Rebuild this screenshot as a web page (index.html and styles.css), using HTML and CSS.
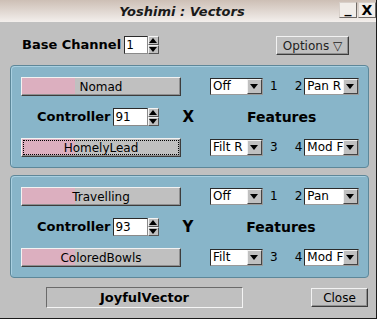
FILE: index.html
```
<!DOCTYPE html>
<html lang="en">
<head>
    <meta charset="UTF-8">
    <title>Yoshimi : Vectors</title>
    <link rel="stylesheet" href="styles.css">
</head>
<body>
    <div class="window">
        <div class="titlebar">
            <span class="title">Yoshimi : Vectors</span>
            <div class="wbtns">
                <span class="wbtn min">_</span>
                <span class="wbtn">X</span>
            </div>
        </div>

        <div class="toprow">
            <span class="lbl">Base Channel</span>
            <div class="spin">
                <span class="field base">1</span>
                <span class="arrows"><i class="up"></i><i class="down"></i></span>
            </div>
            <button class="btn options">Options &#9661;</button>
        </div>

        <div class="panel">
            <div class="row">
                <button class="btn inst"><span class="fill"></span><span class="txt">Nomad</span></button>
                <div class="choice c1"><span>Off</span><i></i></div>
                <span class="num n1">1</span>
                <span class="num n2">2</span>
                <div class="choice"><span>Pan R</span><i></i></div>
            </div>
            <div class="row mid">
                <span class="lbl ctl">Controller</span>
                <div class="spin">
                    <span class="field ctlval">91</span>
                    <span class="arrows"><i class="up"></i><i class="down"></i></span>
                </div>
                <span class="axis">X</span>
                <span class="feat">Features</span>
            </div>
            <div class="row">
                <button class="btn inst focus"><span class="fill"></span><span class="txt">HomelyLead</span></button>
                <div class="choice c1"><span>Filt R</span><i></i></div>
                <span class="num n1">3</span>
                <span class="num n2">4</span>
                <div class="choice"><span>Mod F</span><i></i></div>
            </div>
        </div>

        <div class="panel">
            <div class="row">
                <button class="btn inst"><span class="fill"></span><span class="txt">Travelling</span></button>
                <div class="choice c1"><span>Off</span><i></i></div>
                <span class="num n1">1</span>
                <span class="num n2">2</span>
                <div class="choice"><span>Pan</span><i></i></div>
            </div>
            <div class="row mid">
                <span class="lbl ctl">Controller</span>
                <div class="spin">
                    <span class="field ctlval">93</span>
                    <span class="arrows"><i class="up"></i><i class="down"></i></span>
                </div>
                <span class="axis">Y</span>
                <span class="feat">Features</span>
            </div>
            <div class="row">
                <button class="btn inst"><span class="fill"></span><span class="txt">ColoredBowls</span></button>
                <div class="choice c1"><span>Filt</span><i></i></div>
                <span class="num n1">3</span>
                <span class="num n2">4</span>
                <div class="choice"><span>Mod F</span><i></i></div>
            </div>
        </div>

        <div class="bottom">
            <div class="name">JoyfulVector</div>
            <button class="btn close">Close</button>
        </div>
    </div>
</body>
</html>
```

FILE: styles.css
```
body {
    margin: 0;
    background: #ffffff;
    font-family: "DejaVu Sans", sans-serif;
    font-size: 12px;
    color: #000;
}
.window {
    width: 376px;
    height: 318px;
    background: #c0c0c0;
    border-right: 1px solid #1a1a1a;
    border-bottom: 1px solid #1a1a1a;
    overflow: hidden;
}
.titlebar {
    height: 22px;
    background: linear-gradient(#cdbfb5, #f3efec);
    display: flex;
    align-items: center;
    justify-content: center;
    position: relative;
}
.title {
    font-weight: bold;
    font-style: italic;
    font-size: 13px;
    color: #1a1a1a;
    margin-left: -12px;
}
.wbtns {
    position: absolute;
    right: 0;
    top: 2px;
    display: flex;
    gap: 1px;
}
.wbtn {
    width: 18px;
    height: 16px;
    box-sizing: border-box;
    background: #f1ede9;
    border: 1px solid #d8d0ca;
    border-right-color: #6f6a66;
    border-bottom-color: #6f6a66;
    font-weight: bold;
    font-size: 14px;
    line-height: 15px;
    text-align: center;
}
.wbtn.min {
    line-height: 10px;
}
.toprow {
    height: 43px;
    box-sizing: border-box;
    padding: 14px 0 0 22px;
    display: flex;
    align-items: flex-start;
}
.lbl {
    font-weight: bold;
    font-size: 13px;
    line-height: 18px;
}
.spin {
    display: flex;
    margin-left: 3px;
}
.field {
    background: #fff;
    height: 18px;
    box-sizing: border-box;
    border: 1px solid #2b2b2b;
    border-right-color: #8a8a8a;
    border-bottom-color: #8a8a8a;
    padding-left: 1px;
    line-height: 16px;
    font-size: 12px;
}
.field.base {
    width: 24px;
}
.arrows {
    width: 11px;
    height: 18px;
    display: flex;
    flex-direction: column;
}
.arrows i {
    flex: 1;
    background: #c0c0c0;
    border: 1px solid #f4f4f4;
    border-right-color: #555;
    border-bottom-color: #555;
    position: relative;
}
.arrows i::after {
    content: "";
    position: absolute;
    left: 0;
    top: 1px;
    border-left: 4.5px solid transparent;
    border-right: 4.5px solid transparent;
}
.arrows .up::after {
    border-bottom: 5px solid #000;
}
.arrows .down::after {
    border-top: 5px solid #000;
}
.btn {
    font-family: "DejaVu Sans", sans-serif;
    font-size: 12px;
    background: #c0c0c0;
    border: 1px solid #f2f2f2;
    border-right-color: #3c3c3c;
    border-bottom-color: #3c3c3c;
    box-shadow: inset -1px -1px 0 #8f8f8f;
    padding: 0;
    margin: 0;
    color: #000;
}
.options {
    width: 73px;
    height: 19px;
    margin-left: auto;
    margin-right: 27px;
    line-height: 16px;
    color: #222;
}
.panel {
    margin-left: 10px;
    width: 359px;
    height: 103px;
    box-sizing: border-box;
    background: #88b5c9;
    border: 1px solid #5d8799;
    border-radius: 4px;
    box-shadow: inset 1px 1px 0 #a9d0e1;
    padding: 11px 0 0 10px;
    display: grid;
    grid-template-rows: 19px 42px 19px;
}
.panel + .panel {
    margin-top: 7px;
}
.row {
    display: flex;
    align-items: center;
}
.inst {
    width: 160px;
    height: 19px;
    position: relative;
    display: flex;
    align-items: center;
    justify-content: center;
}
.inst .fill {
    position: absolute;
    left: 0;
    top: 0;
    bottom: 1px;
    width: 53px;
    background: #dcafbf;
}
.inst .txt {
    position: relative;
    line-height: 16px;
}
.focus::before {
    content: "";
    position: absolute;
    inset: 1px;
    border: 1px dotted #000;
    z-index: 1;
}
.choice {
    width: 55px;
    height: 17px;
    box-sizing: border-box;
    background: #fff;
    border: 1px solid #2b2b2b;
    border-right-color: #9a9a9a;
    border-bottom-color: #9a9a9a;
    display: flex;
    align-items: center;
    overflow: hidden;
}
.choice.c1 {
    width: 53px;
    margin-left: 29px;
}
.choice span {
    flex: 1;
    padding-left: 2px;
    white-space: nowrap;
    overflow: hidden;
    line-height: 15px;
}
.choice i {
    width: 15px;
    height: 15px;
    box-sizing: border-box;
    background: #c0c0c0;
    border: 1px solid #f2f2f2;
    border-right-color: #444;
    border-bottom-color: #444;
    position: relative;
    flex: none;
}
.choice i::after {
    content: "";
    position: absolute;
    left: 2px;
    top: 4px;
    border-left: 4.5px solid transparent;
    border-right: 4.5px solid transparent;
    border-top: 5px solid #000;
}
.num {
    font-size: 12px;
    line-height: 15px;
}
.num.n1 {
    margin-left: 7px;
}
.num.n2 {
    margin-left: 17px;
    margin-right: 2px;
}
.mid {
    padding-left: 16px;
}
.ctl {
    font-size: 13px;
}
.field.ctlval {
    width: 35px;
}
.axis {
    font-weight: bold;
    font-size: 15px;
    margin-left: 23px;
}
.feat {
    font-weight: bold;
    font-size: 14px;
    margin-left: 53px;
}
.bottom {
    display: flex;
    align-items: center;
    padding: 9px 0 0 46px;
}
.name {
    width: 197px;
    height: 21px;
    box-sizing: border-box;
    border: 1px solid #6a6a6a;
    border-right-color: #f4f4f4;
    border-bottom-color: #f4f4f4;
    text-align: center;
    font-weight: bold;
    font-size: 13px;
    line-height: 19px;
}
.close {
    width: 57px;
    height: 19px;
    margin-left: 68px;
    line-height: 16px;
}
```
